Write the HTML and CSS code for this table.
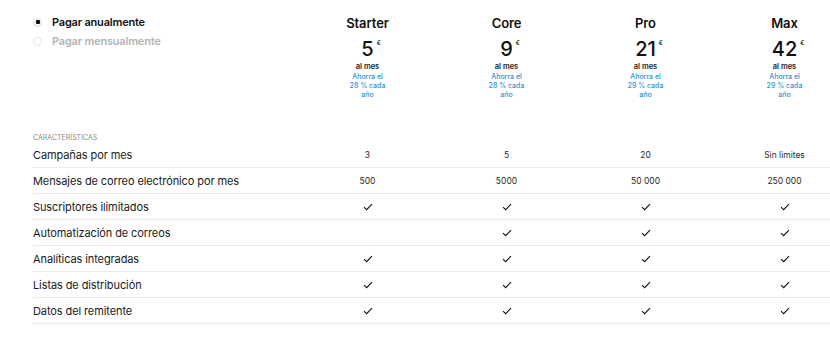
FILE: index.html
```html
<!DOCTYPE html>
<html lang="es">
<head>
    <meta charset="UTF-8">
    <meta name="viewport" content="width=device-width, initial-scale=1.0">
    <title>Planes y precios</title>
    <link rel="stylesheet" href="styles.css">
</head>
<body>

    <div class="pricing">
        <!-- Plan headers -->
        <div class="plans-head">
            <div class="billing">
                <label class="radio active"><span class="radio-dot"></span>Pagar anualmente</label>
                <label class="radio"><span class="radio-dot"></span>Pagar mensualmente</label>
            </div>

            <div class="plan">
                <div class="plan-name">Starter</div>
                <div class="plan-price">5<span class="currency">€</span></div>
                <div class="plan-period">al mes</div>
                <div class="plan-save">Ahorra el 28 % cada año</div>
            </div>
            <div class="plan">
                <div class="plan-name">Core</div>
                <div class="plan-price">9<span class="currency">€</span></div>
                <div class="plan-period">al mes</div>
                <div class="plan-save">Ahorra el 28 % cada año</div>
            </div>
            <div class="plan">
                <div class="plan-name">Pro</div>
                <div class="plan-price">21<span class="currency">€</span></div>
                <div class="plan-period">al mes</div>
                <div class="plan-save">Ahorra el 29 % cada año</div>
            </div>
            <div class="plan">
                <div class="plan-name">Max</div>
                <div class="plan-price">42<span class="currency">€</span></div>
                <div class="plan-period">al mes</div>
                <div class="plan-save">Ahorra el 29 % cada año</div>
            </div>
        </div>

        <!-- Features table -->
        <div class="features">
            <div class="section-title">Características</div>

            <div class="row">
                <div class="label">Campañas por mes</div>
                <div class="cell">3</div>
                <div class="cell">5</div>
                <div class="cell">20</div>
                <div class="cell">Sin limites</div>
            </div>
            <div class="row">
                <div class="label">Mensajes de correo electrónico por mes</div>
                <div class="cell">500</div>
                <div class="cell">5000</div>
                <div class="cell">50 000</div>
                <div class="cell">250 000</div>
            </div>
            <div class="row">
                <div class="label">Suscriptores ilimitados</div>
                <div class="cell"><svg class="check" viewBox="0 0 12 10"><path d="M1 5.2 L4.3 8.3 L11 1.5"/></svg></div>
                <div class="cell"><svg class="check" viewBox="0 0 12 10"><path d="M1 5.2 L4.3 8.3 L11 1.5"/></svg></div>
                <div class="cell"><svg class="check" viewBox="0 0 12 10"><path d="M1 5.2 L4.3 8.3 L11 1.5"/></svg></div>
                <div class="cell"><svg class="check" viewBox="0 0 12 10"><path d="M1 5.2 L4.3 8.3 L11 1.5"/></svg></div>
            </div>
            <div class="row">
                <div class="label">Automatización de correos</div>
                <div class="cell"></div>
                <div class="cell"><svg class="check" viewBox="0 0 12 10"><path d="M1 5.2 L4.3 8.3 L11 1.5"/></svg></div>
                <div class="cell"><svg class="check" viewBox="0 0 12 10"><path d="M1 5.2 L4.3 8.3 L11 1.5"/></svg></div>
                <div class="cell"><svg class="check" viewBox="0 0 12 10"><path d="M1 5.2 L4.3 8.3 L11 1.5"/></svg></div>
            </div>
            <div class="row">
                <div class="label">Analíticas integradas</div>
                <div class="cell"><svg class="check" viewBox="0 0 12 10"><path d="M1 5.2 L4.3 8.3 L11 1.5"/></svg></div>
                <div class="cell"><svg class="check" viewBox="0 0 12 10"><path d="M1 5.2 L4.3 8.3 L11 1.5"/></svg></div>
                <div class="cell"><svg class="check" viewBox="0 0 12 10"><path d="M1 5.2 L4.3 8.3 L11 1.5"/></svg></div>
                <div class="cell"><svg class="check" viewBox="0 0 12 10"><path d="M1 5.2 L4.3 8.3 L11 1.5"/></svg></div>
            </div>
            <div class="row">
                <div class="label">Listas de distribución</div>
                <div class="cell"><svg class="check" viewBox="0 0 12 10"><path d="M1 5.2 L4.3 8.3 L11 1.5"/></svg></div>
                <div class="cell"><svg class="check" viewBox="0 0 12 10"><path d="M1 5.2 L4.3 8.3 L11 1.5"/></svg></div>
                <div class="cell"><svg class="check" viewBox="0 0 12 10"><path d="M1 5.2 L4.3 8.3 L11 1.5"/></svg></div>
                <div class="cell"><svg class="check" viewBox="0 0 12 10"><path d="M1 5.2 L4.3 8.3 L11 1.5"/></svg></div>
            </div>
            <div class="row">
                <div class="label">Datos del remitente</div>
                <div class="cell"><svg class="check" viewBox="0 0 12 10"><path d="M1 5.2 L4.3 8.3 L11 1.5"/></svg></div>
                <div class="cell"><svg class="check" viewBox="0 0 12 10"><path d="M1 5.2 L4.3 8.3 L11 1.5"/></svg></div>
                <div class="cell"><svg class="check" viewBox="0 0 12 10"><path d="M1 5.2 L4.3 8.3 L11 1.5"/></svg></div>
                <div class="cell"><svg class="check" viewBox="0 0 12 10"><path d="M1 5.2 L4.3 8.3 L11 1.5"/></svg></div>
            </div>
        </div>
    </div>

</body>
</html>
```

FILE: styles.css
```css
/* General Styles */
body {
    font-family: 'Inter', 'Liberation Sans', sans-serif;
    background-color: #fff;
    color: #1a1a1a;
    margin: 0;
    padding: 0;
    overflow: hidden;
}

/* Table is wider than the window, the last column gets cut off */
.pricing {
    width: 100%;
    box-sizing: border-box;
    padding: 15px 0 0 33px;
    overflow: hidden;
}

/* Plan headers */
.plans-head,
.row {
    display: grid;
    grid-template-columns: 265px repeat(4, 139px);
}

.plans-head {
    height: 119px;
}

.billing {
    display: flex;
    flex-direction: column;
    gap: 5px;
}

.radio {
    display: flex;
    align-items: center;
    gap: 10px;
    font-size: 11px;
    font-weight: 600;
    letter-spacing: -0.2px;
    line-height: 14px;
    color: #b4b4b4;
}

.radio.active {
    color: #111;
}

.radio-dot {
    width: 9px;
    height: 9px;
    border-radius: 50%;
    border: 1px solid #e4e4e4;
    box-sizing: border-box;
    display: flex;
    align-items: center;
    justify-content: center;
}

.radio.active .radio-dot {
    border-color: #ddd;
    background: #f6f6f6;
}

.radio.active .radio-dot::after {
    content: "";
    width: 4px;
    height: 4px;
    border-radius: 1px;
    background: #111;
}

.plan {
    display: flex;
    flex-direction: column;
    align-items: center;
    text-align: center;
}

.plan-name {
    font-size: 13px;
    font-weight: 600;
    letter-spacing: -0.1px;
    line-height: 16px;
    color: #111;
}

.plan-price {
    font-size: 20px;
    font-weight: 500;
    line-height: 24px;
    margin-top: 6px;
    color: #111;
    position: relative;
}

.currency {
    position: absolute;
    left: 100%;
    top: 2px;
    margin-left: 3px;
    font-size: 6px;
    line-height: 8px;
    font-weight: 500;
}

.plan-period {
    font-size: 7.5px;
    font-weight: 600;
    line-height: 10px;
    margin-top: 1px;
    color: #222;
}

.plan-save {
    width: 40px;
    font-size: 7px;
    font-weight: 500;
    line-height: 9px;
    color: #2f94d6;
}

/* Features table */
.section-title {
    font-size: 7px;
    line-height: 8px;
    text-transform: uppercase;
    color: #8a8a8a;
}

.row {
    height: 25px;
    border-bottom: 1px solid #ebebeb;
    align-items: center;
}

.label {
    font-size: 11px;
    letter-spacing: -0.1px;
    color: #1a1a1a;
}

.cell {
    display: flex;
    justify-content: center;
    font-size: 8.5px;
    color: #2a2a2a;
}

.check {
    width: 10px;
    height: 8px;
    fill: none;
    stroke: #111;
    stroke-width: 1.4;
}
```
